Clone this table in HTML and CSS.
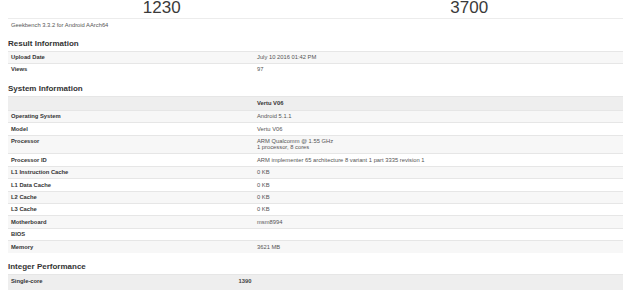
FILE: index.html
```html
<!DOCTYPE html>
<html>
<head>
<meta charset="utf-8">
<link rel="stylesheet" href="styles.css">
</head>
<body>
<div class="page">
  <div class="scores">
    <div class="score">1230</div>
    <div class="score">3700</div>
  </div>
  <div class="version">Geekbench 3.3.2 for Android AArch64</div>

  <section class="section first">
    <h2 class="title">Result Information</h2>
    <table class="info">
      <tr class="odd"><td class="name">Upload Date</td><td class="value">July 10 2016 01:42 PM</td></tr>
      <tr><td class="name">Views</td><td class="value">97</td></tr>
    </table>
  </section>

  <section class="section">
    <h2 class="title">System Information</h2>
    <table class="info">
      <tr class="head"><td class="name"></td><td class="value bold">Vertu V06</td></tr>
      <tr class="odd"><td class="name">Operating System</td><td class="value">Android 5.1.1</td></tr>
      <tr><td class="name">Model</td><td class="value">Vertu V06</td></tr>
      <tr class="odd"><td class="name">Processor</td><td class="value">ARM Qualcomm @ 1.55 GHz<br>1 processor, 8 cores</td></tr>
      <tr><td class="name">Processor ID</td><td class="value">ARM implementer 65 architecture 8 variant 1 part 3335 revision 1</td></tr>
      <tr class="odd"><td class="name">L1 Instruction Cache</td><td class="value">0 KB</td></tr>
      <tr><td class="name">L1 Data Cache</td><td class="value">0 KB</td></tr>
      <tr class="odd"><td class="name">L2 Cache</td><td class="value">0 KB</td></tr>
      <tr><td class="name">L3 Cache</td><td class="value">0 KB</td></tr>
      <tr class="odd"><td class="name">Motherboard</td><td class="value">msm8994</td></tr>
      <tr><td class="name">BIOS</td><td class="value"></td></tr>
      <tr class="odd"><td class="name">Memory</td><td class="value">3621 MB</td></tr>
    </table>
  </section>

  <section class="section last">
    <h2 class="title">Integer Performance</h2>
    <table class="perf">
      <tr class="head"><td class="pname">Single-core</td><td class="pscore">1390</td></tr>
    </table>
  </section>
</div>
</body>
</html>
```

FILE: styles.css
```css
html, body {
  margin: 0;
  padding: 0;
  background: #ffffff;
}

body {
  font-family: "Liberation Sans", Arial, sans-serif;
  color: #333333;
  overflow: hidden;
}

.page {
  width: 615px;
  margin-left: 8px;
}

.scores {
  display: grid;
  grid-template-columns: 1fr 1fr;
  height: 18px;
  overflow: hidden;
  border-bottom: 1px solid #ececec;
}

.score {
  text-align: center;
  font-size: 17px;
  line-height: 17px;
  margin-top: -1.5px;
  color: #3a3a3a;
}

.version {
  font-size: 5.8px;
  line-height: 7px;
  padding: 2.5px 3px 0;
  height: 7px;
  color: #555555;
}

.section {
  margin-top: 9px;
}

.section.first {
  margin-top: 10.5px;
}

.section.last {
  margin-top: 9.5px;
}

.title {
  margin: 0 0 1.5px;
  font-size: 8px;
  line-height: 10px;
  font-weight: bold;
  color: #333333;
}

.info, .perf {
  width: 100%;
  border-collapse: collapse;
  font-size: 5.8px;
  line-height: 6.4px;
}

.info td, .perf td {
  padding: 2.5px 3px;
  border-top: 1px solid #e6e6e6;
  vertical-align: top;
}

.info .head td {
  padding: 3px 3px 3.5px;
}

.info .name {
  width: 40%;
  font-weight: bold;
  color: #333333;
}

.info .value {
  color: #555555;
}

.info .value.bold {
  font-weight: bold;
  color: #333333;
}

.odd td {
  background: #f7f7f7;
}

.head td {
  background: #eeeeee;
}

.perf td {
  padding: 3px 3px 8px;
}

.perf .pname {
  width: 37%;
  font-weight: bold;
  color: #333333;
}

.perf .pscore {
  font-weight: bold;
  color: #444444;
}
```
